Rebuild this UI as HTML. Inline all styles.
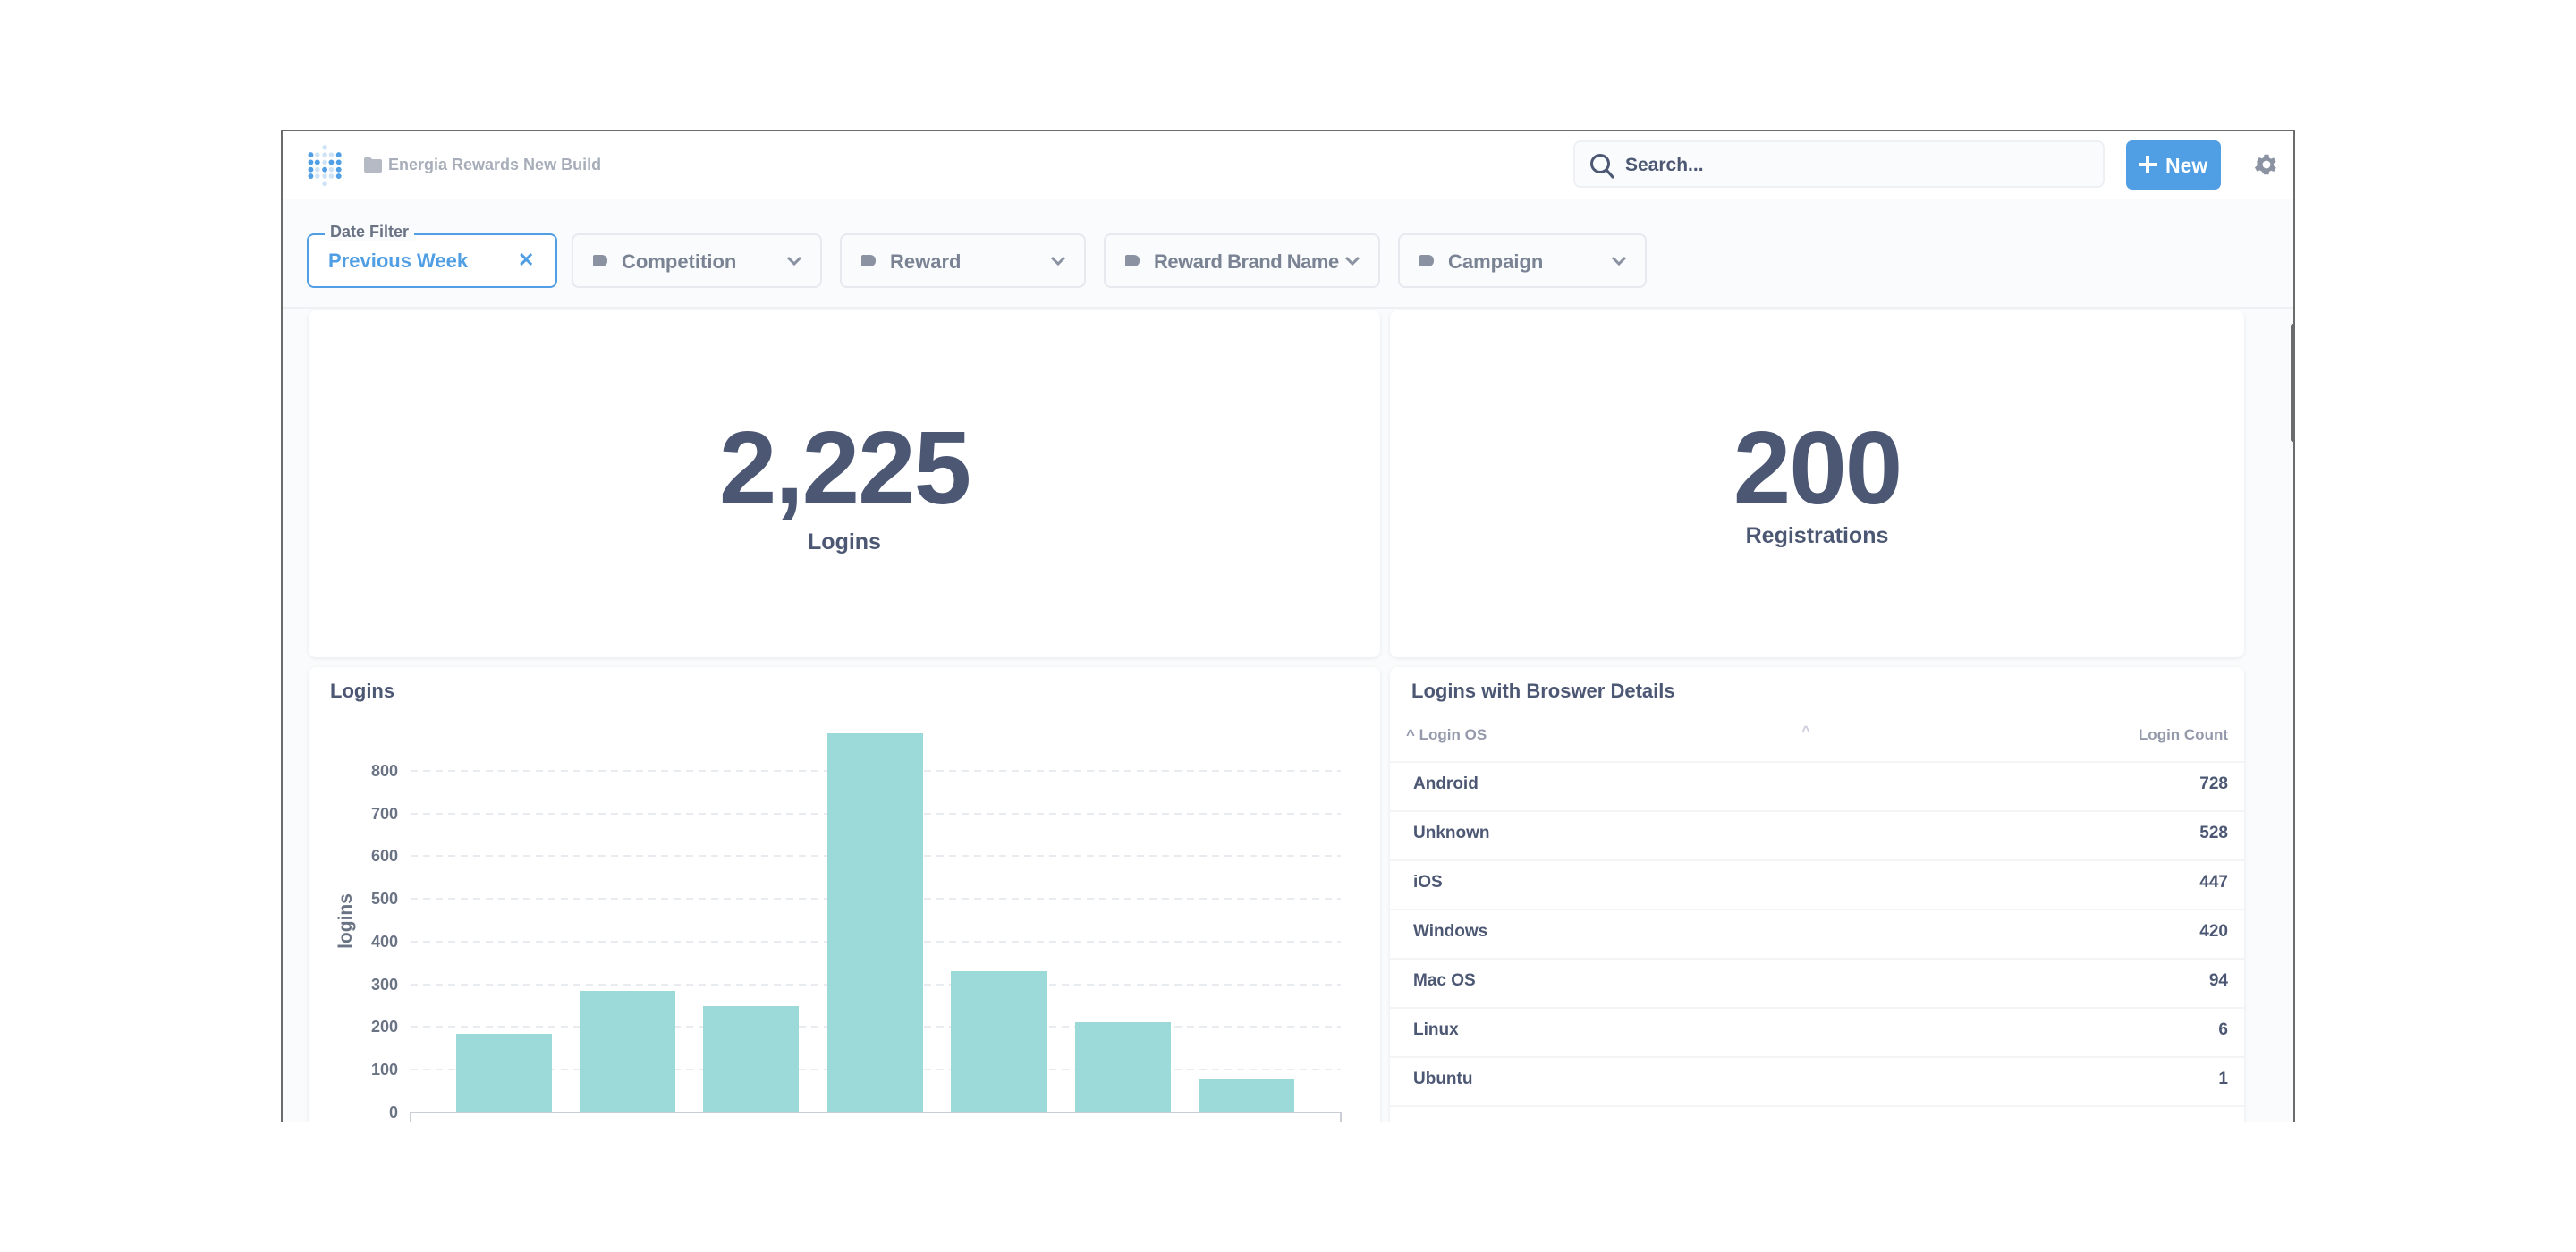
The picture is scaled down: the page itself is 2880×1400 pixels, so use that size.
<!DOCTYPE html>
<html><head><meta charset="utf-8"><style>
*{box-sizing:border-box;margin:0;padding:0}
body{width:2880px;height:1400px;background:#fff;font-family:"Liberation Sans",sans-serif;color:#4c5773;position:relative;overflow:hidden}
.frame{position:absolute;left:314px;top:145px;width:2252px;height:1110px;border:2px solid #6b6b6b;border-bottom:none;overflow:hidden;background:#f9fbfc}
.a{position:absolute}
.hdr{left:0;top:0;width:100%;height:75px;background:#fff}
.fbar{left:0;top:75px;width:100%;height:123px;background:#f9fbfc;border-bottom:2px solid #eef0f3}
.flt{position:absolute;top:114px;height:61px;border:2px solid #e6e9ee;border-radius:8px;background:#f9fbfc;font-size:22px;font-weight:bold;color:#7a8394}
.flt .t{position:absolute;left:22px;top:22px;width:16px;height:13px;background:#8b93a3;border-radius:2px 6px 6px 2px}
.flt .l{position:absolute;left:54px;top:17px}
.flt svg{position:absolute;right:20px;top:23px}
.card{position:absolute;background:#fff;border-radius:8px;box-shadow:0 1px 4px rgba(0,0,0,.08)}
.row{position:absolute;left:0;right:0;height:55px;border-bottom:2px solid #f2f4f6;font-size:19px;font-weight:bold;color:#4c5773}
.row span{position:absolute;top:13px}
</style></head><body>
<div class="frame">
 <div class="a hdr">
  <svg class="a" style="left:25px;top:13px" width="46" height="52" viewBox="0 0 50 56">
   <g fill="#509ee3">
    <circle cx="7" cy="14" r="3.2"/><circle cx="41" cy="14" r="3.2"/>
    <circle cx="7" cy="23" r="3.2"/><circle cx="15" cy="23" r="3.2"/><circle cx="32" cy="23" r="3.2"/><circle cx="41" cy="23" r="3.2"/>
    <circle cx="7" cy="32" r="3.2"/><circle cx="24" cy="32" r="3.2"/><circle cx="41" cy="32" r="3.2"/>
    <circle cx="7" cy="40" r="3.2"/><circle cx="41" cy="40" r="3.2"/>
   </g>
   <g fill="#cfe3f7">
    <circle cx="24" cy="5" r="3"/><circle cx="15" cy="14" r="3"/><circle cx="24" cy="14" r="3"/><circle cx="32" cy="14" r="3"/>
    <circle cx="24" cy="23" r="3"/><circle cx="15" cy="32" r="3"/><circle cx="32" cy="32" r="3"/>
    <circle cx="15" cy="40" r="3"/><circle cx="24" cy="40" r="3"/><circle cx="32" cy="40" r="3"/><circle cx="24" cy="49" r="3"/>
   </g>
  </svg>
  <svg class="a" style="left:91px;top:29px" width="20" height="17" viewBox="0 0 20 17"><path d="M0 2Q0 0 2 0H7L9 2H18Q20 2 20 4V15Q20 17 18 17H2Q0 17 0 15Z" fill="#b5bac4"/></svg>
  <div class="a" style="left:118px;top:27px;font-size:18px;font-weight:bold;color:#a7aeb9">Energia Rewards New Build</div>
  <div class="a" style="left:1443px;top:10px;width:594px;height:53px;border:2px solid #eef0f3;border-radius:8px;background:#f9fbfc">
   <svg class="a" style="left:16px;top:12px" width="28" height="30" viewBox="0 0 28 30"><circle cx="12" cy="12" r="9.5" fill="none" stroke="#4c5773" stroke-width="3"/><path d="M19 19L26 27" stroke="#4c5773" stroke-width="3.2" stroke-linecap="round"/></svg>
   <div class="a" style="left:56px;top:14px;font-size:21px;font-weight:bold;color:#4c5773">Search...</div>
  </div>
  <div class="a" style="left:2061px;top:10px;width:106px;height:55px;background:#509ee3;border-radius:7px;color:#fff;font-size:23px;font-weight:bold">
   <svg class="a" style="left:12px;top:15px" width="24" height="24" viewBox="0 0 24 24"><path d="M12 2V22M2 12H22" stroke="#fff" stroke-width="4"/></svg>
   <span class="a" style="left:44px;top:15px">New</span>
  </div>
  <svg class="a" style="left:2203px;top:22px" width="30" height="30" viewBox="0 0 24 24"><path fill="#8b93a3" d="M19.4 13a7.5 7.5 0 0 0 0-2l2.1-1.6-2-3.5-2.5 1a7 7 0 0 0-1.7-1L15 3h-4l-.4 2.6a7 7 0 0 0-1.7 1l-2.5-1-2 3.5L4.6 11a7.5 7.5 0 0 0 0 2l-2.1 1.6 2 3.5 2.5-1a7 7 0 0 0 1.7 1L11 21h4l.4-2.6a7 7 0 0 0 1.7-1l2.5 1 2-3.5zM13 15.5a3.5 3.5 0 1 1 0-7 3.5 3.5 0 0 1 0 7z" transform="translate(-1 0)"/></svg>
 </div>
 <div class="a fbar"></div>
 <div class="flt" style="left:27px;width:280px;border-color:#509ee3;background:#fff">
  <div class="a" style="left:18px;top:-14px;background:#f9fbfc;padding:0 6px;font-size:18px;color:#6a7384">Date Filter</div>
  <div class="a" style="left:22px;top:16px;color:#509ee3">Previous Week</div>
  <div class="a" style="left:234px;top:15px;color:#509ee3;font-size:22px">✕</div>
 </div>
 <div class="flt" style="left:323px;width:280px"><i class="t"></i><span class="l">Competition</span><svg width="18" height="12" viewBox="0 0 18 12"><path d="M2 2L9 9L16 2" fill="none" stroke="#8b93a3" stroke-width="3"/></svg></div>
 <div class="flt" style="left:623px;width:275px"><i class="t"></i><span class="l">Reward</span><svg width="18" height="12" viewBox="0 0 18 12"><path d="M2 2L9 9L16 2" fill="none" stroke="#8b93a3" stroke-width="3"/></svg></div>
 <div class="flt" style="left:918px;width:309px"><i class="t"></i><span class="l" style="letter-spacing:-0.5px">Reward Brand Name</span><svg width="18" height="12" viewBox="0 0 18 12"><path d="M2 2L9 9L16 2" fill="none" stroke="#8b93a3" stroke-width="3"/></svg></div>
 <div class="flt" style="left:1247px;width:278px"><i class="t"></i><span class="l">Campaign</span><svg width="18" height="12" viewBox="0 0 18 12"><path d="M2 2L9 9L16 2" fill="none" stroke="#8b93a3" stroke-width="3"/></svg></div>

 <div class="card" style="left:29px;top:200px;width:1198px;height:388px">
  <div class="a" style="left:0;right:0;top:118px;text-align:center;font-size:116px;font-weight:bold;color:#4c5773;line-height:116px;letter-spacing:-2px">2,225</div>
  <div class="a" style="left:0;right:0;top:245px;text-align:center;font-size:25px;font-weight:bold">Logins</div>
 </div>
 <div class="card" style="left:1238px;top:200px;width:955px;height:388px">
  <div class="a" style="left:0;right:0;top:118px;text-align:center;font-size:116px;font-weight:bold;color:#4c5773;line-height:116px;letter-spacing:-2px">200</div>
  <div class="a" style="left:0;right:0;top:238px;text-align:center;font-size:25px;font-weight:bold">Registrations</div>
 </div>

 <div class="card" style="left:29px;top:599px;width:1198px;height:600px">
  <div class="a" style="left:24px;top:14px;font-size:22px;font-weight:bold">Logins</div>
 </div>
 <svg class="a" style="left:0;top:0" width="1240" height="1110" viewBox="0 0 1240 1110">
  <g stroke="#e8ebef" stroke-width="2" stroke-dasharray="8 6">
   <line x1="143" x2="1183" y1="715" y2="715"/><line x1="143" x2="1183" y1="763" y2="763"/><line x1="143" x2="1183" y1="810" y2="810"/><line x1="143" x2="1183" y1="858" y2="858"/><line x1="143" x2="1183" y1="906" y2="906"/><line x1="143" x2="1183" y1="954" y2="954"/><line x1="143" x2="1183" y1="1001" y2="1001"/><line x1="143" x2="1183" y1="1049" y2="1049"/>
  </g>
  <g fill="#9bdad9">
   <rect x="194" y="1009" width="107" height="88"/>
   <rect x="332" y="961" width="107" height="136"/>
   <rect x="470" y="978" width="107" height="119"/>
   <rect x="609" y="673" width="107" height="424"/>
   <rect x="747" y="939" width="107" height="158"/>
   <rect x="886" y="996" width="107" height="101"/>
   <rect x="1024" y="1060" width="107" height="37"/>
  </g>
  <path d="M143 1110V1097H1183V1110" fill="none" stroke="#c9ced6" stroke-width="2"/>
  <g font-family="Liberation Sans" font-weight="bold" font-size="18" fill="#6a7384" text-anchor="end">
   <text x="129" y="721">800</text><text x="129" y="769">700</text><text x="129" y="816">600</text><text x="129" y="864">500</text><text x="129" y="912">400</text><text x="129" y="960">300</text><text x="129" y="1007">200</text><text x="129" y="1055">100</text><text x="129" y="1103">0</text>
  </g>
  <text transform="translate(77 883) rotate(-90)" text-anchor="middle" font-family="Liberation Sans" font-weight="bold" font-size="21" fill="#6a7384">logins</text>
 </svg>

 <div class="card" style="left:1238px;top:599px;width:955px;height:600px">
  <div class="a" style="left:24px;top:14px;font-size:22px;font-weight:bold">Logins with Broswer Details</div>
  <div class="row" style="top:50px;height:57px;font-size:17px;color:#949aab"><span style="left:18px;top:16px">^ Login OS</span><span style="left:460px;top:12px;color:#ccd">^</span><span style="right:18px;top:16px">Login Count</span></div>
  <div class="row" style="top:107px"><span style="left:26px">Android</span><span style="right:18px">728</span></div>
  <div class="row" style="top:162px"><span style="left:26px">Unknown</span><span style="right:18px">528</span></div>
  <div class="row" style="top:217px"><span style="left:26px">iOS</span><span style="right:18px">447</span></div>
  <div class="row" style="top:272px"><span style="left:26px">Windows</span><span style="right:18px">420</span></div>
  <div class="row" style="top:327px"><span style="left:26px">Mac OS</span><span style="right:18px">94</span></div>
  <div class="row" style="top:382px"><span style="left:26px">Linux</span><span style="right:18px">6</span></div>
  <div class="row" style="top:437px"><span style="left:26px">Ubuntu</span><span style="right:18px">1</span></div>
 </div>
 <div class="a" style="left:2245px;top:215px;width:5px;height:132px;background:#6b6b6b;border-radius:3px"></div>
</div>
</body></html>
